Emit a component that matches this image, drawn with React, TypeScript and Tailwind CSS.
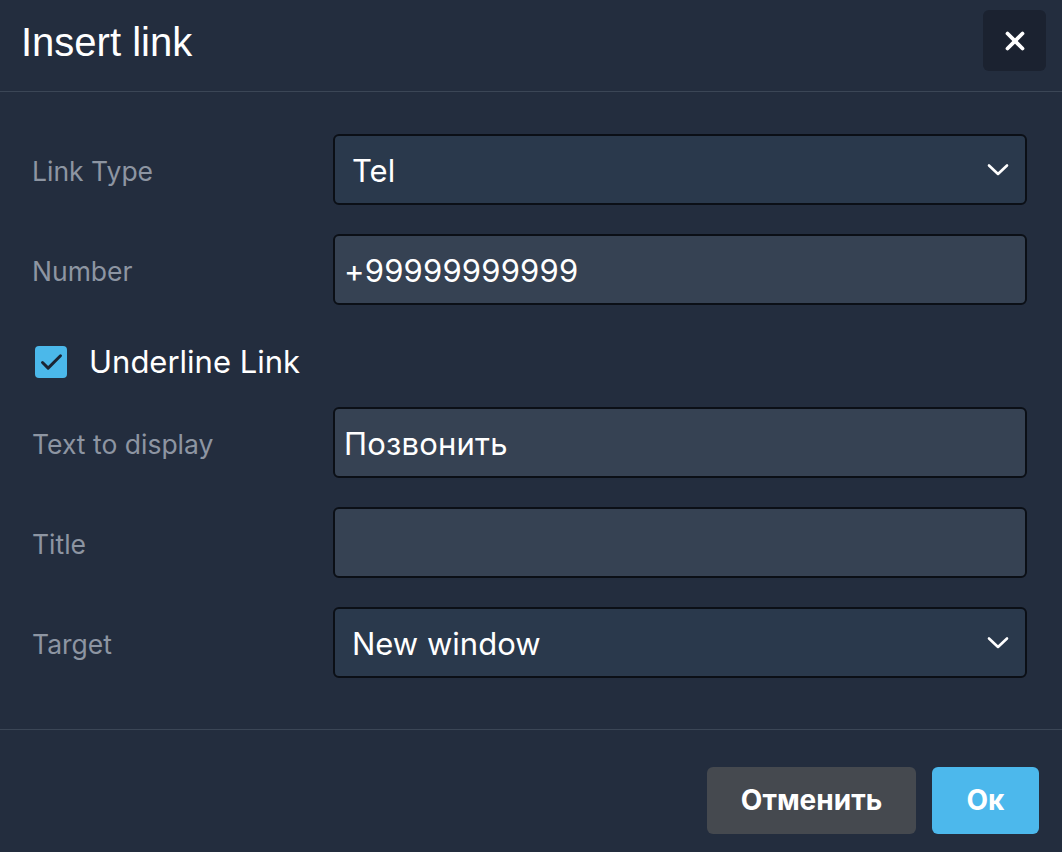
import React from 'react';
import { X, Check } from 'lucide-react';

const labelCls = 'w-[301px] shrink-0 pt-[5px] text-[26.5px] text-[#8d95a2] font-["Inter",sans-serif]';
const boxCls =
  'flex-1 h-[71px] flex items-center rounded-[6px] border-2 border-[#0b0f16] text-white text-[31px] font-["Inter",sans-serif]';

const Chevron = () => (
  <svg width="22" height="14" viewBox="0 0 22 14" fill="none">
    <polyline points="2,2.5 11,11 20,2.5" stroke="white" strokeWidth="2.6" strokeLinecap="round" strokeLinejoin="round" />
  </svg>
);

const SelectRow: React.FC<{ label: string; value: string }> = ({ label, value }) => (
  <div className="flex items-center">
    <div className={labelCls}>{label}</div>
    <div className={`${boxCls} bg-[#2a394c] pl-[17px] pr-[16px] justify-between`}>
      <span className="pt-[3px]">{value}</span>
      <Chevron />
    </div>
  </div>
);

const InputRow: React.FC<{ label: string; value?: string }> = ({ label, value }) => (
  <div className="flex items-center">
    <div className={labelCls}>{label}</div>
    <div className={`${boxCls} bg-[#364253] pl-[9px]`}>
      <span className="pt-[3px] tracking-[0.2px]">{value}</span>
    </div>
  </div>
);

export default function App() {
  return (
    <div className="w-[1062px] h-[852px] bg-[#232d3e] flex flex-col">
      <div className="h-[92px] flex items-start justify-between pl-[21px] pr-[16px] border-b border-[#3b4656]">
        <h1 className='mt-[18px] text-[40px] leading-[48px] text-white font-["Liberation_Sans",sans-serif]'>Insert link</h1>
        <button className="mt-[10px] w-[63px] h-[61px] rounded-[6px] bg-[#1b2230] flex items-center justify-center">
          <X size={30} strokeWidth={3} className="text-white" />
        </button>
      </div>

      <div className="flex-1 flex flex-col pl-[32px] pr-[35px] pt-[42px] border-b border-[#3b4656]">
        <div className="flex flex-col gap-[29px]">
          <SelectRow label="Link Type" value="Tel" />
          <InputRow label="Number" value="+99999999999" />
        </div>
        <div className="flex items-center h-[102px] pt-[12px]">
          <div className="ml-[3px] w-[32px] h-[32px] rounded-[4px] bg-[#4bb8ea] flex items-center justify-center">
            <Check size={27} strokeWidth={2.6} className="text-[#1b2433]" />
          </div>
          <span className='ml-[22px] text-[31px] text-white font-["Inter",sans-serif]'>Underline Link</span>
        </div>
        <div className="flex flex-col gap-[29px]">
          <InputRow label="Text to display" value="Позвонить" />
          <InputRow label="Title" />
          <SelectRow label="Target" value="New window" />
        </div>
      </div>

      <div className="h-[122px] flex items-center justify-end gap-[16px] pr-[23px] pt-[18px]">
        <button className='w-[209px] h-[67px] rounded-[6px] bg-[#45494f] text-white text-[28px] font-bold font-["Inter",sans-serif]'>
          Отменить
        </button>
        <button className='w-[107px] h-[67px] rounded-[6px] bg-[#4cb8ec] text-white text-[28px] font-bold font-["Inter",sans-serif]'>
          Ок
        </button>
      </div>
    </div>
  );
}
